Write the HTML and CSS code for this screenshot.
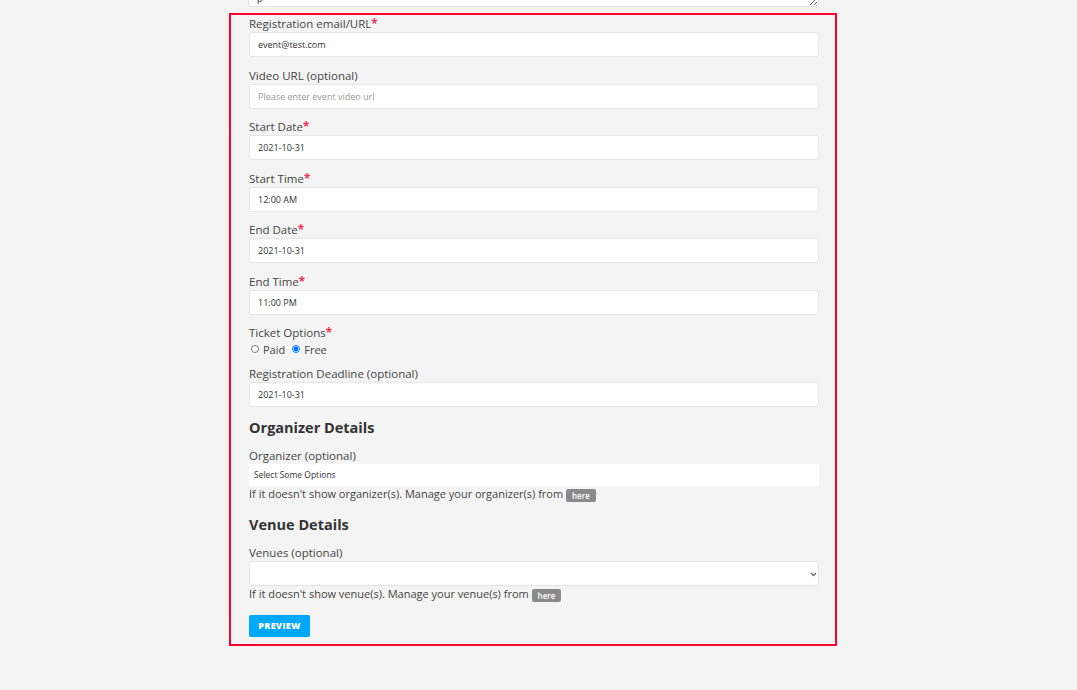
FILE: index.html
```html
<!doctype html>
<html lang="en">
<head>
    <meta charset="UTF-8" />
    <title>Create Event</title>
    <link rel="stylesheet" href="styles.css">
</head>
<body>
<div class="page">
    <div class="prev-field">
        <textarea class="textarea" rows="2">p</textarea>
    </div>
    <form class="event-form">
        <div class="field">
            <label class="label">Registration email/URL<span class="req">*</span></label>
            <input class="input" type="text" value="event@test.com" />
        </div>
        <div class="field">
            <label class="label">Video URL (optional)</label>
            <input class="input" type="text" placeholder="Please enter event video url" />
        </div>
        <div class="field">
            <label class="label">Start Date<span class="req">*</span></label>
            <input class="input" type="text" value="2021-10-31" />
        </div>
        <div class="field">
            <label class="label">Start Time<span class="req">*</span></label>
            <input class="input" type="text" value="12:00 AM" />
        </div>
        <div class="field">
            <label class="label">End Date<span class="req">*</span></label>
            <input class="input" type="text" value="2021-10-31" />
        </div>
        <div class="field">
            <label class="label">End Time<span class="req">*</span></label>
            <input class="input" type="text" value="11:00 PM" />
        </div>
        <div class="field field-radio">
            <label class="label">Ticket Options<span class="req">*</span></label>
            <div class="radios">
                <label class="radio"><input type="radio" name="ticket" /> Paid</label>
                <label class="radio"><input type="radio" name="ticket" checked /> Free</label>
            </div>
        </div>
        <div class="field">
            <label class="label">Registration Deadline (optional)</label>
            <input class="input" type="text" value="2021-10-31" />
        </div>

        <h3 class="section-title">Organizer Details</h3>
        <div class="field field-help">
            <label class="label">Organizer (optional)</label>
            <div class="multi">Select Some Options</div>
            <p class="help">If it doesn't show organizer(s). Manage your organizer(s) from <a href="javascript:;" class="badge">here</a></p>
        </div>

        <h3 class="section-title">Venue Details</h3>
        <div class="field field-help">
            <label class="label">Venues (optional)</label>
            <div class="select-wrap">
                <select class="select"><option></option></select>
                <svg class="chevron" width="7" height="5" viewBox="0 0 7 5"><path d="M1 1l2.5 2.5L6 1" fill="none" stroke="#666" stroke-width="1.3"/></svg>
            </div>
            <p class="help">If it doesn't show venue(s). Manage your venue(s) from <a href="javascript:;" class="badge">here</a></p>
        </div>

        <button type="button" class="btn">Preview</button>
    </form>
</div>
</body>
</html>
```

FILE: styles.css
```css
body{
    margin: 0;
    background: #f4f4f4;
    font-family: "Open Sans", "Noto Sans", sans-serif;
    color: #444;
}
.page{
    width: 608px;
    margin-left: 229px;
}
.prev-field{
    height: 7px;
    overflow: hidden;
    padding: 0 17px 0 19px;
    margin-bottom: 6px;
}
.textarea{
    display: block;
    box-sizing: border-box;
    width: 571px;
    height: 40px;
    margin-top: -33px;
    padding: 25px 8px 0;
    border: 1px solid #e2e2e2;
    border-radius: 3px;
    background: #fff;
    font: 9px/12px "Open Sans", sans-serif;
    color: #333;
    resize: vertical;
    overflow: hidden;
}
.event-form{
    border: 2px solid #ff0031;
    padding: 1px 16px 7px 18px;
}
.field{
    margin-bottom: 10.5px;
}
.field-radio{
    margin-bottom: 9px;
}
.field-help{
    margin-bottom: 13px;
}
.label{
    display: block;
    font-size: 11.5px;
    line-height: 16px;
    color: #444;
}
.req{
    color: #ff2a4d;
    font-weight: 700;
}
.input{
    display: block;
    box-sizing: border-box;
    width: 100%;
    height: 25px;
    margin: 0;
    padding: 0 8px;
    border: 1px solid #e6e6e6;
    border-radius: 3px;
    background: #fff;
    font: 9px "Open Sans", sans-serif;
    color: #333;
    outline: none;
}
.input::placeholder{
    color: #999;
}
.radios{
    display: flex;
    align-items: center;
    height: 16px;
    font-size: 11px;
    color: #444;
}
.radio{
    display: flex;
    align-items: center;
    margin-right: 5px;
}
.radio input{
    width: 8px;
    height: 8px;
    margin: 0 4px 0 2px;
}
.section-title{
    margin: 2px 0 10.5px;
    font-size: 14.5px;
    line-height: 20px;
    font-weight: 700;
    color: #333;
}
.multi{
    box-sizing: border-box;
    height: 22px;
    padding: 0 5px;
    background: #fff;
    font-size: 8.5px;
    line-height: 22px;
    color: #333;
}
.help{
    margin: 0;
    font-size: 11px;
    line-height: 15px;
    color: #444;
}
.badge{
    display: inline-block;
    padding: 0 6px;
    border-radius: 2px;
    background: #8a8a8a;
    color: #fff;
    font-size: 8px;
    font-weight: 600;
    line-height: 13px;
    text-decoration: none;
    vertical-align: middle;
}
.select-wrap{
    position: relative;
}
.select{
    display: block;
    box-sizing: border-box;
    width: 100%;
    height: 25px;
    margin: 0;
    border: 1px solid #e4e4e4;
    border-radius: 3px;
    background: #fff;
    appearance: none;
    outline: none;
}
.chevron{
    position: absolute;
    right: 2px;
    top: 11px;
}
.btn{
    display: block;
    margin-top: 3px;
    width: 61px;
    height: 22px;
    padding: 0;
    border: 0;
    border-radius: 2px;
    background: #00a8ff;
    color: #fff;
    font: 800 9px "Open Sans", sans-serif;
    letter-spacing: 0.3px;
    text-transform: uppercase;
}
```
